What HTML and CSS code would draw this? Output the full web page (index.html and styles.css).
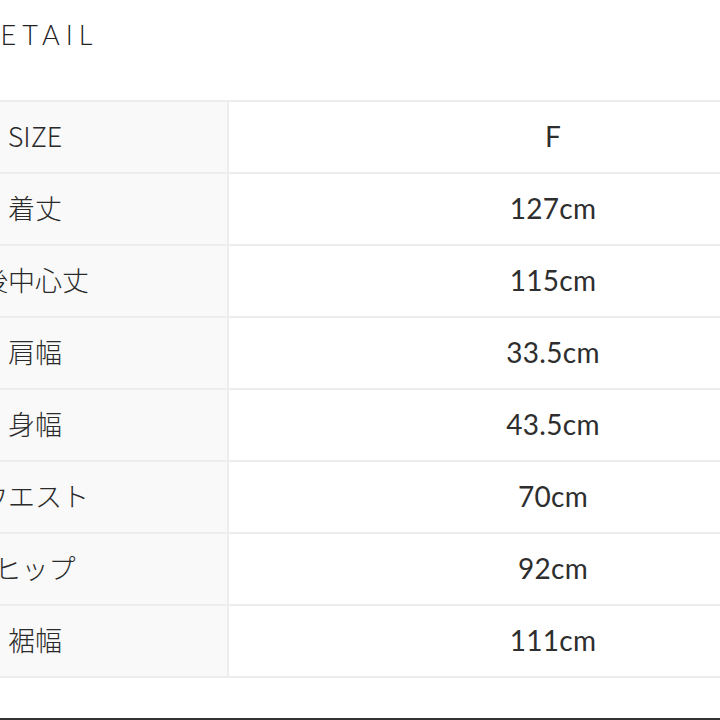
FILE: index.html
```html
<!DOCTYPE html>
<html lang="ja">
<head>
<meta charset="utf-8">
<link rel="stylesheet" href="styles.css">
</head>
<body>
<div class="page">
  <h2 class="title">DETAIL</h2>
  <div class="table">
    <div class="cell key">SIZE</div><div class="cell val">F</div>
    <div class="cell key">着丈</div><div class="cell val">127cm</div>
    <div class="cell key">後中心丈</div><div class="cell val">115cm</div>
    <div class="cell key">肩幅</div><div class="cell val">33.5cm</div>
    <div class="cell key">身幅</div><div class="cell val">43.5cm</div>
    <div class="cell key">ウエスト</div><div class="cell val">70cm</div>
    <div class="cell key">ヒップ</div><div class="cell val">92cm</div>
    <div class="cell key">裾幅</div><div class="cell val">111cm</div>
  </div>
  <div class="bottom-bar"></div>
</div>
</body>
</html>
```
FILE: styles.css
```css
html, body {
  margin: 0;
  padding: 0;
  background: #ffffff;
}
.page {
  width: 720px;
  height: 720px;
  overflow: hidden;
  position: relative;
}
.title {
  margin: 0 0 0 -26px;
  height: 100px;
  box-sizing: border-box;
  padding-top: 20px;
  font-family: "Lato", "Noto Sans", sans-serif;
  font-weight: 300;
  font-size: 27px;
  line-height: 30px;
  letter-spacing: 6px;
  color: #222;
}
.table {
  display: grid;
  grid-template-columns: 386px 648px;
  grid-auto-rows: 72px;
  width: 1034px;
  margin-left: -157px;
  border-top: 2px solid #ededed;
}
.cell {
  box-sizing: border-box;
  display: flex;
  align-items: center;
  justify-content: center;
  border-bottom: 2px solid #ededed;
}
.key {
  background: #f9f9f9;
  border-right: 2px solid #ededed;
  padding-bottom: 4px;
  font-family: "Noto Sans CJK JP", "Noto Sans", sans-serif;
  font-weight: 300;
  font-size: 27px;
  color: #2a2a2a;
}
.val {
  background: #ffffff;
  padding-bottom: 3px;
  font-family: "Lato", "Noto Sans", sans-serif;
  font-weight: 400;
  font-size: 28px;
  letter-spacing: 0.3px;
  color: #2e2e2e;
}
.bottom-bar {
  position: absolute;
  left: 0;
  right: 0;
  bottom: 0;
  height: 2px;
  background: #333;
}
```
